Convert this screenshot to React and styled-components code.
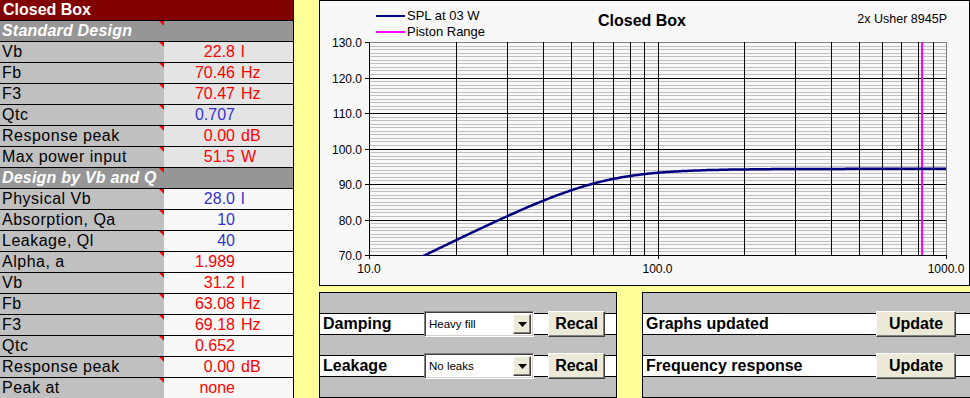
import React from "react";
import styled, { createGlobalStyle } from "styled-components";

const GlobalStyle = createGlobalStyle`
  html, body {
    margin: 0;
    padding: 0;
    background: #ffff99;
    overflow: hidden;
    font-family: "Liberation Sans", Arial, sans-serif;
  }
`;

const Page = styled.div`
  display: flex;
  gap: 25px;
  width: 970px;
  height: 398px;
  overflow: hidden;
`;

/* ---------- left parameter sheet ---------- */

// black background shows through the 1px row gaps as cell borders
const Sheet = styled.div`
  display: grid;
  grid-auto-rows: 20px;
  row-gap: 1px;
  align-content: start;
  width: 294px;
  height: 420px;
  flex-shrink: 0;
  box-sizing: border-box;
  padding-right: 1px;
  background: #000;
  font-size: 16px;
  line-height: 20px;
`;

const TitleRow = styled.div`
  background: #800000;
  color: #fff;
  font-weight: bold;
  padding-left: 3px;
`;

const Row = styled.div`
  display: grid;
  grid-template-columns: 164px 129px;
`;

const HeadRow = styled.div`
  position: relative;
  background: #969696;
  color: #fff;
  font-style: italic;
  font-weight: bold;
  padding-left: 2px;
  letter-spacing: 0.2px;
`;

const CommentMark = styled.span`
  position: absolute;
  top: 0;
  left: 159px;
  width: 0;
  height: 0;
  border-top: 5px solid #ff0000;
  border-left: 5px solid transparent;
`;

const Label = styled.div`
  position: relative;
  background: #c0c0c0;
  color: #000;
  padding-left: 2px;
  letter-spacing: 0.5px;
  white-space: nowrap;
`;

const Value = styled.div`
  display: grid;
  grid-template-columns: 71px auto;
  column-gap: 6px;
  background: ${({ $alt }) => ($alt ? "#f8f8f8" : "#e4e4e4")};
  color: ${({ $blue }) => ($blue ? "#3333cc" : "#ff0000")};
`;

const Num = styled.span`
  text-align: right;
`;

const sheetRows = [
  { head: "Standard Design" },
  { label: "Vb", value: "22.8", unit: "l" },
  { label: "Fb", value: "70.46", unit: "Hz" },
  { label: "F3", value: "70.47", unit: "Hz" },
  { label: "Qtc", value: "0.707", blue: true },
  { label: "Response peak", value: "0.00", unit: "dB" },
  { label: "Max power input", value: "51.5", unit: "W" },
  { head: "Design by Vb and Q" },
  { label: "Physical Vb", value: "28.0", unit: "l", blue: true, alt: true },
  { label: "Absorption, Qa", value: "10", blue: true, alt: true },
  { label: "Leakage, Ql", value: "40", blue: true, alt: true },
  { label: "Alpha, a", value: "1.989", alt: true },
  { label: "Vb", value: "31.2", unit: "l", alt: true },
  { label: "Fb", value: "63.08", unit: "Hz", alt: true },
  { label: "F3", value: "69.18", unit: "Hz", alt: true },
  { label: "Qtc", value: "0.652", alt: true },
  { label: "Response peak", value: "0.00", unit: "dB", alt: true },
  { label: "Peak at", value: "none", alt: true },
];

/* ---------- right side ---------- */

const RightCol = styled.div`
  display: flex;
  flex-direction: column;
  gap: 6px;
  width: 651px;
  flex-shrink: 0;
`;

const ChartBox = styled.div`
  height: 286px;
  box-sizing: border-box;
  border: 1px solid #000;
  background: #f8f8f8;
  svg {
    display: block;
  }
`;

const ChartTitle = styled.text`
  font: bold 16px "Liberation Sans", Arial, sans-serif;
  fill: #000;
`;

const ChartText = styled.text`
  font: ${({ $size }) => $size || 12}px "Liberation Sans", Arial, sans-serif;
  fill: #000;
`;

const Controls = styled.div`
  display: flex;
  gap: 25px;
`;

const Panel = styled.div`
  width: ${({ $w }) => $w}px;
  flex-shrink: 0;
  box-sizing: border-box;
  border: 1px solid #000;
  background: #c0c0c0;
`;

const Spacer = styled.div`
  height: 20px;
`;

const CtrlRow = styled.div`
  display: flex;
  align-items: center;
  height: 22px;
  box-sizing: border-box;
  border-top: 1px solid #000;
  border-bottom: 1px solid #000;
  background: #fff;
  padding-left: 3px;
  padding-right: ${({ $pr }) => $pr || 0}px;
`;

const CtrlLabel = styled.div`
  width: ${({ $w }) => $w}px;
  font-weight: bold;
  font-size: 16px;
  color: #000;
  white-space: nowrap;
`;

const Select = styled.div`
  display: flex;
  align-items: center;
  justify-content: space-between;
  width: 110px;
  height: 26px;
  box-sizing: border-box;
  background: #fff;
  border: 1px solid;
  border-color: #808080 #ffffff #ffffff #808080;
  box-shadow: inset 1px 1px 0 #404040, inset -1px -1px 0 #d4d0c8;
  padding: 2px 2px 2px 4px;
  font-size: 11.5px;
  color: #000;
`;

const ArrowBtn = styled.div`
  display: flex;
  align-items: center;
  justify-content: center;
  width: 18px;
  height: 20px;
  box-sizing: border-box;
  background: #ece9d8;
  border: 1px solid;
  border-color: #ffffff #404040 #404040 #ffffff;
  box-shadow: inset -1px -1px 0 #808080;
`;

const Btn = styled.div`
  display: flex;
  align-items: center;
  justify-content: center;
  width: ${({ $w }) => $w}px;
  height: 26px;
  box-sizing: border-box;
  margin-left: ${({ $ml }) => $ml || "0"};
  background: #ece9d8;
  border: 1px solid;
  border-color: #ffffff #404040 #404040 #ffffff;
  box-shadow: inset -1px -1px 0 #808080;
  font-weight: bold;
  font-size: 16px;
  color: #000;
`;

/* ---------- chart ---------- */

const X0 = 49;
const X1 = 626;
const Y0 = 41;
const Y1 = 254;
const fx = (f) => X0 + ((Math.log10(f) - 1) * (X1 - X0)) / 2;
const dy = (v) => Y0 + ((130 - v) * (Y1 - Y0)) / 60;
const px = (n) => Math.round(n) + 0.5;

const spl = (f) => {
  const r = f / 63.08;
  const q = 0.652;
  const r2 = r * r;
  const h = (r2 * r2) / ((1 - r2) * (1 - r2) + (r / q) * (r / q));
  return 94.3 + 10 * Math.log10(h);
};

const curve = [];
for (let i = 0; i <= 500; i++) {
  const f = Math.pow(10, 1 + (2 * i) / 500);
  const v = spl(f);
  if (v >= 69.5) curve.push(`${fx(f).toFixed(1)},${dy(v).toFixed(1)}`);
}

const vLines = [20, 30, 40, 50, 60, 70, 80, 90, 100, 200, 300, 400, 500, 600, 700, 800, 900];

const Chart = () => (
  <svg width="649" height="284" viewBox="0 0 649 284" shapeRendering="crispEdges">
    <defs>
      <clipPath id="plot">
        <rect x={X0} y={Y0 - 2} width={X1 - X0 + 1} height={Y1 - Y0 + 3} />
      </clipPath>
    </defs>

    {/* legend */}
    <line x1="56" y1="14.5" x2="85" y2="14.5" stroke="#000080" strokeWidth="2" />
    <ChartText $size={13} x="87" y="19">SPL at 03 W</ChartText>
    <line x1="56" y1="31" x2="85" y2="31" stroke="#ff00ff" strokeWidth="1.5" />
    <ChartText $size={13} x="87" y="35">Piston Range</ChartText>

    <ChartTitle x="322" y="25" textAnchor="middle">Closed Box</ChartTitle>
    <ChartText $size={12.5} x="627" y="22" textAnchor="end">2x Usher 8945P</ChartText>

    {/* minor horizontal grid */}
    {Array.from({ length: 59 }, (_, i) => 71 + i)
      .filter((v) => v % 10 !== 0)
      .map((v) => (
        <line key={v} x1={X0} x2={X1} y1={px(dy(v))} y2={px(dy(v))} stroke="#c0c0c0" />
      ))}
    {[80, 90, 100, 110, 120].map((v) => (
      <line key={v} x1={X0 - 4} x2={X1} y1={px(dy(v))} y2={px(dy(v))} stroke="#000" />
    ))}
    <line x1={X0 - 4} x2={X1} y1={px(dy(130))} y2={px(dy(130))} stroke="#808080" />
    <line x1={X0 - 4} x2={X0} y1={px(dy(130))} y2={px(dy(130))} stroke="#000" />

    {vLines.map((f) => (
      <line key={f} x1={px(fx(f))} x2={px(fx(f))} y1={Y0} y2={Y1} stroke="#000" />
    ))}
    <line x1={px(X1)} x2={px(X1)} y1={Y0} y2={Y1 + 4} stroke="#808080" />

    {/* axes */}
    <line x1={px(X0)} x2={px(X0)} y1={Y0} y2={Y1 + 4} stroke="#000" />
    <line x1={X0 - 4} x2={X1 + 1} y1={px(Y1)} y2={px(Y1)} stroke="#000" />
    <line x1={px(fx(100))} x2={px(fx(100))} y1={Y1} y2={Y1 + 4} stroke="#000" />
    <line x1={px(X1)} x2={px(X1)} y1={Y1} y2={Y1 + 4} stroke="#000" />

    {[70, 80, 90, 100, 110, 120, 130].map((v) => (
      <ChartText key={v} x="42" y={dy(v) + 5} textAnchor="end">
        {v.toFixed(1)}
      </ChartText>
    ))}
    {[10, 100, 1000].map((f) => (
      <ChartText key={f} x={fx(f)} y="272" textAnchor="middle">
        {f.toFixed(1)}
      </ChartText>
    ))}

    {/* piston range marker */}
    <line x1={Math.round(fx(817)) + 1} x2={Math.round(fx(817)) + 1} y1={Y0} y2={Y1} stroke="#ff00ff" strokeWidth="2" />

    <polyline
      points={curve.join(" ")}
      fill="none"
      stroke="#000080"
      strokeWidth="2.5"
      clipPath="url(#plot)"
      shapeRendering="geometricPrecision"
    />
  </svg>
);

const DownArrow = () => (
  <svg width="9" height="5" viewBox="0 0 9 5">
    <polygon points="0,0 9,0 4.5,5" fill="#000" />
  </svg>
);

const Choice = ({ label, option }) => (
  <CtrlRow>
    <CtrlLabel $w={101}>{label}</CtrlLabel>
    <Select>
      <span>{option}</span>
      <ArrowBtn>
        <DownArrow />
      </ArrowBtn>
    </Select>
    <Btn $w={57} $ml="14px">Recal</Btn>
  </CtrlRow>
);

const Action = ({ label }) => (
  <CtrlRow $pr={15}>
    <CtrlLabel $w={200}>{label}</CtrlLabel>
    <Btn $w={80} $ml="auto">Update</Btn>
  </CtrlRow>
);

const App = () => (
  <>
    <GlobalStyle />
    <Page>
      <Sheet>
        <TitleRow>Closed Box</TitleRow>
        {sheetRows.map((r, i) =>
          r.head ? (
            <HeadRow key={i}>
              {r.head}
              <CommentMark />
            </HeadRow>
          ) : (
            <Row key={i}>
              <Label>
                {r.label}
                <CommentMark />
              </Label>
              <Value $alt={r.alt} $blue={r.blue}>
                <Num>{r.value}</Num>
                <span>{r.unit}</span>
              </Value>
            </Row>
          )
        )}
      </Sheet>

      <RightCol>
        <ChartBox>
          <Chart />
        </ChartBox>
        <Controls>
          <Panel $w={298}>
            <Spacer />
            <Choice label="Damping" option="Heavy fill" />
            <Spacer />
            <Choice label="Leakage" option="No leaks" />
            <Spacer />
          </Panel>
          <Panel $w={330}>
            <Spacer />
            <Action label="Graphs updated" />
            <Spacer />
            <Action label="Frequency response" />
            <Spacer />
          </Panel>
        </Controls>
      </RightCol>
    </Page>
  </>
);

export default App;
